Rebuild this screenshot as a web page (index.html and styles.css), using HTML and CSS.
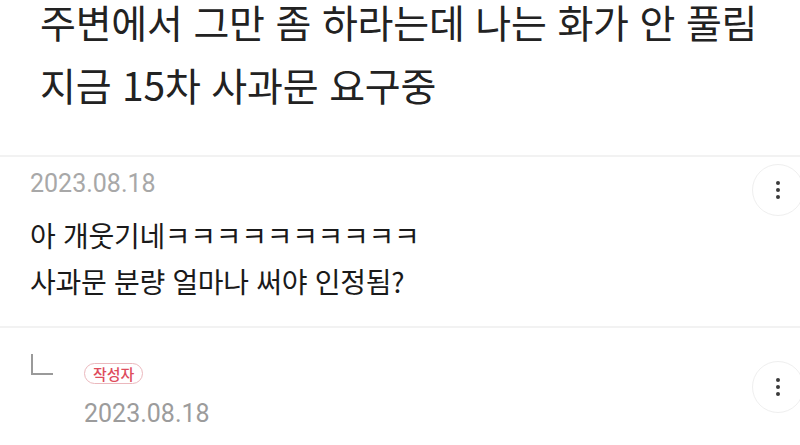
FILE: index.html
```html
<!DOCTYPE html>
<html lang="ko">
<head>
    <meta charset="UTF-8">
    <meta name="viewport" content="width=device-width, initial-scale=1.0">
    <title>댓글</title>
    <link rel="stylesheet" href="styles.css">
</head>
<body>
    <h1 class="title">주변에서 그만 좀 하라는데 나는 화가 안 풀림<br>지금 15차 사과문 요구중</h1>

    <div class="comment">
        <div class="comment-main">
            <div class="date">2023.08.18</div>
            <p class="text">아 개웃기네ㅋㅋㅋㅋㅋㅋㅋㅋㅋㅋ<br>사과문 분량 얼마나 써야 인정됨?</p>
        </div>
        <button class="more" type="button" aria-label="더보기">
            <span class="dot"></span><span class="dot"></span><span class="dot"></span>
        </button>
    </div>

    <div class="comment reply">
        <svg class="reply-mark" width="22" height="21" viewBox="0 0 22 21">
            <path d="M1 0 V20 H22" fill="none" stroke="#9a9a9a" stroke-width="2"/>
        </svg>
        <div class="comment-main">
            <span class="badge">작성자</span>
            <div class="date">2023.08.18</div>
        </div>
        <button class="more" type="button" aria-label="더보기">
            <span class="dot"></span><span class="dot"></span><span class="dot"></span>
        </button>
    </div>
</body>
</html>
```

FILE: styles.css
```css
body {
    margin: 0;
    background-color: white;
    color: #1e1e1e;
    font-family: "Noto Sans CJK KR", "Noto Sans", sans-serif;
    overflow: hidden;
}
.title {
    margin: -10px 0 0;
    padding: 0 0 0 40px;
    font-size: 39px;
    font-weight: 400;
    line-height: 63px;
    color: #222;
    letter-spacing: -0.2px;
}
.comment {
    display: flex;
    align-items: flex-start;
    border-top: 2px solid #f2f2f2;
    margin-top: 39px;
    padding: 12px 0 22px 30px;
}
.comment-main {
    flex: 1;
}
.date {
    font-family: Roboto, "Noto Sans", sans-serif;
    font-size: 25px;
    line-height: 30px;
    color: #a8a8a8;
}
.text {
    margin: 13px 0 0;
    font-size: 28px;
    line-height: 46px;
    color: #1a1a1a;
    letter-spacing: -0.3px;
}
.more {
    width: 52px;
    height: 52px;
    margin: -5px -4px 0 0;
    padding: 0;
    border: 1.5px solid #efefef;
    border-radius: 50%;
    background-color: white;
    display: flex;
    flex-direction: column;
    align-items: center;
    justify-content: center;
    gap: 3px;
}
.dot {
    width: 4px;
    height: 4px;
    border-radius: 50%;
    background-color: #3a3a3a;
}
.reply {
    margin-top: 0;
    padding: 26px 0 20px 31px;
}
.reply-mark {
    flex: none;
    margin-right: 31px;
}
.reply .comment-main {
    padding-top: 7px;
}
.reply .date {
    color: #9c9c9c;
    margin-top: 14px;
}
.reply .more {
    margin-top: 7px;
}
.badge {
    display: inline-block;
    padding: 0 8px;
    border: 1.5px solid #ebb8bd;
    border-radius: 11px;
    font-size: 15px;
    font-weight: 500;
    line-height: 19px;
    color: #de4c5c;
}
```
